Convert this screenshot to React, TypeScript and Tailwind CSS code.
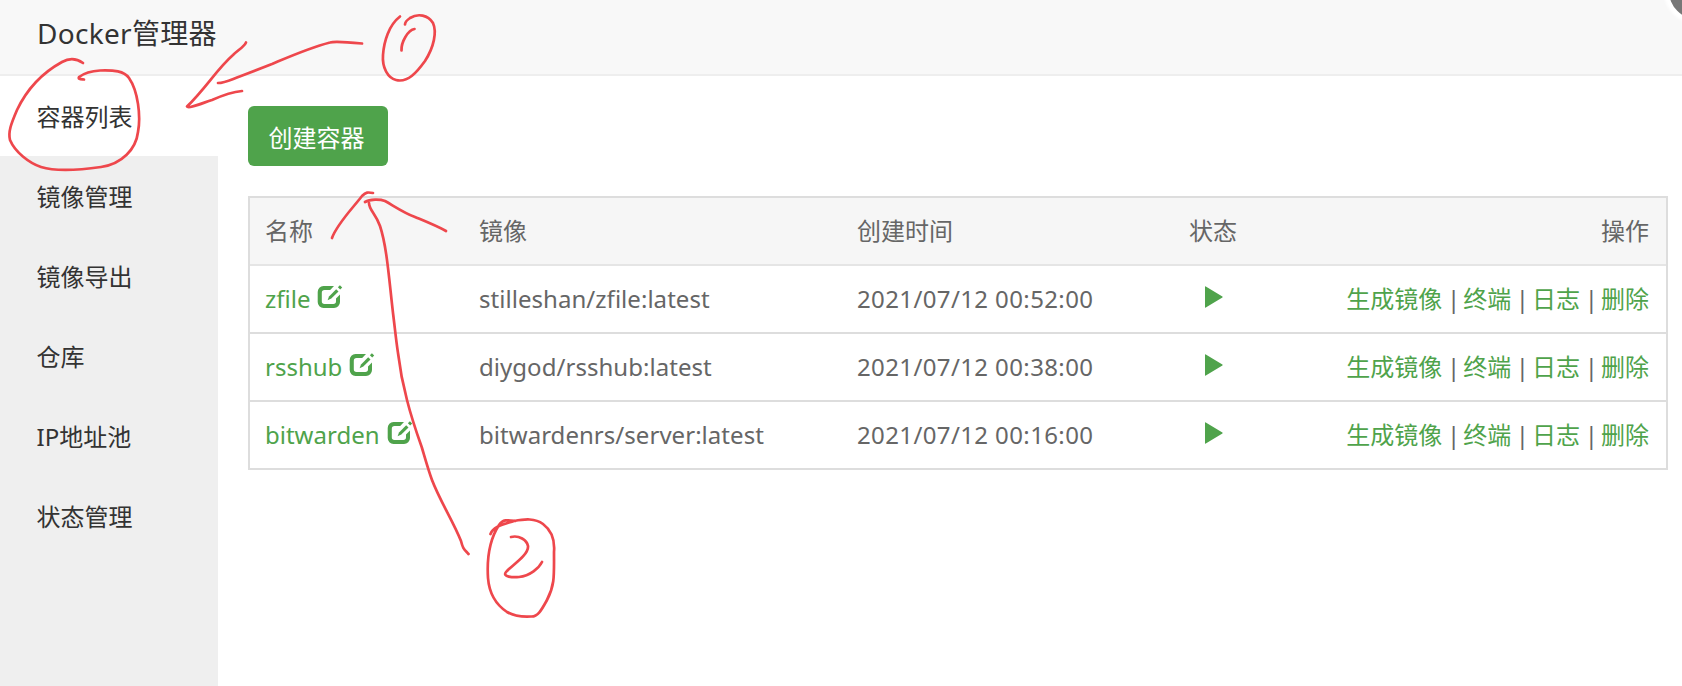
import React from 'react';

interface Container {
  name: string;
  image: string;
  created: string;
}

const menu = ['容器列表', '镜像管理', '镜像导出', '仓库', 'IP地址池', '状态管理'];

const containers: Container[] = [
  { name: 'zfile', image: 'stilleshan/zfile:latest', created: '2021/07/12 00:52:00' },
  { name: 'rsshub', image: 'diygod/rsshub:latest', created: '2021/07/12 00:38:00' },
  { name: 'bitwarden', image: 'bitwardenrs/server:latest', created: '2021/07/12 00:16:00' },
];

const actions = ['生成镜像', '终端', '日志', '删除'];

function EditIcon() {
  return (
    <svg width="26" height="24" viewBox="0 0 26 24" className="ml-[7px] mb-[5px] shrink-0">
      <path
        d="M6.5 1H17L13.2 5H7.5A2.7 2.7 0 0 0 4.8 7.7V16.3A2.7 2.7 0 0 0 7.5 19H16.3A2.7 2.7 0 0 0 19 16.3V13.5L23 9.5V17A6 6 0 0 1 17 23H6.5A6 6 0 0 1 .7 17V7A6 6 0 0 1 6.5 1Z"
        fill="currentColor"
      />
      <path d="M19.2 4.2L21.5 6.4L14.3 13.6L10.6 15.3L12 11.4Z" fill="currentColor" />
      <path d="M22.9 .3L25.2 2.5L23.2 4.5L20.9 2.3Z" fill="currentColor" />
    </svg>
  );
}

function PlayIcon() {
  return (
    <svg width="18" height="22" viewBox="0 0 18 22" className="mb-1 ml-px" fill="currentColor">
      <path d="M0 .8Q0 0 .8.4L17.4 10.4Q18 11 17.4 11.4L.8 21.4Q0 22 0 21.2z" />
    </svg>
  );
}

// Hand-drawn step markers over the page
function Annotations() {
  return (
    <svg
      width="1682"
      height="686"
      viewBox="0 0 1682 686"
      className="absolute left-0 top-0 pointer-events-none"
      fill="none"
      stroke="#ee474c"
      strokeWidth="2.7"
      strokeLinecap="round"
      strokeLinejoin="round"
    >
      <path d="M83 63C76 58 69 58 62 62C42 73 27 89 17 110C11 124 8 132 10 140C15 152 29 163 41 167C57 172 80 170 101 167C122 164 136 149 138 132C141 116 138 91 129 78C124 71 114 70 100 70.5C91 71 83 74 79 77C78 79 80 79 84 79.5" />
      <path d="M246 42.5C244 47 238 50 233 55C217 69 206 88 187 106.5C188 109 200 104 212 100C221 96 231 92 242 91" />
      <path d="M218 83C225 83 230 80 241 76L272 64C291 56 309 48 330 42.5C335 41 346 42 362 43.5" />
      <path d="M400 16.5C389 25 384 41 383 55C382 68 388 78 396 80C408 83 417 72 425 61C434 47 437 32 433 23C428 15 418 13 410 18C407 20 405 22 405 24.5" />
      <path d="M414.5 29C408 30 401 42 401.5 50.5" />
      <path d="M332 238C337 224 352 209 362 196C366 192 368 192 373 193" />
      <path d="M365 202C370 199 380 199 385 201C394 206 404 213 415 217C427 222 437 226 446 231" />
      <path d="M369 203C369 210 376 214 380 226C387 247 389 279 393 313C395 329 396 340 398 353C400 370 403 385 407 400C411 416 416 431 421.7 447C425 458 428 469 432 480C440 501 453 521 461 541C463 549 464 549 468.5 554" />
      <path d="M490.5 534C493 526 505 524 514 521C525 519 535 518 543 524C551 530 555 540 554 552C554 575 555 585 547 600C542 609 538 617 531 616.5C523 617 514 616 507 612C495 604 489 591 488 578C487 562 488 542 499 525C503 519 508 520 515 521" />
      <path d="M511 537C519 535 527 540 528 546C529 555 511 566 506 572C502 577 513 577.5 519 577C530 576 539 568 542 562" />
    </svg>
  );
}

export default function App() {
  return (
    <div className="relative flex h-[686px] w-[1682px] flex-col overflow-hidden bg-white text-2xl text-[#666] font-['Noto_Sans','Noto_Sans_CJK_SC',sans-serif]">
      <header className="flex h-[76px] shrink-0 items-center border-b-2 border-[#eee] bg-[#f8f8f8] pl-[37px] pb-1.5 text-[28px] text-[#333]">
        <h1 className="tracking-[0.3px]">Docker管理器</h1>
      </header>

      <div className="flex flex-1">
        <nav className="w-[218px] shrink-0 bg-[#efefef] text-[#333]">
          {menu.map((label, i) => (
            <a key={label} className={`flex h-20 items-center pl-[36.5px] pt-0.5 ${i === 0 ? 'bg-white' : ''}`}>
              {label}
            </a>
          ))}
        </nav>

        <main className="flex-1 pl-[30px] pr-3.5 pt-[30px]">
          <button type="button" className="block h-[60px] w-[140px] rounded-md bg-[#4fa34b] pr-[3px] pt-1 text-white">
            创建容器
          </button>

          <table className="mt-[30px] w-[1420px] table-fixed border-separate border-spacing-0 border-2 border-b-0 border-[#ddd] text-left whitespace-nowrap">
            <colgroup>
              <col className="w-[213px]" />
              <col className="w-[378px]" />
              <col className="w-[308px]" />
              <col className="w-[128px]" />
              <col />
            </colgroup>
            <thead className="bg-[#f6f6f6]">
              <tr className="h-[68px]">
                <th className="border-b-2 border-[#e5e5e5] pl-[15px] py-0 font-normal">名称</th>
                <th className="border-b-2 border-[#e5e5e5] px-4 py-0 font-normal">镜像</th>
                <th className="border-b-2 border-[#e5e5e5] px-4 py-0 font-normal">创建时间</th>
                <th className="border-b-2 border-[#e5e5e5] px-4 py-0 text-center font-normal">状态</th>
                <th className="border-b-2 border-[#e5e5e5] pr-[17px] py-0 text-right font-normal">操作</th>
              </tr>
            </thead>
            <tbody>
              {containers.map((c) => (
                <tr key={c.name} className="h-[68px]">
                  <td className="border-b-2 border-[#ddd] pl-[15px] py-0 text-[#4fa34b]">
                    <a className="flex items-center">
                      {c.name}
                      <EditIcon />
                    </a>
                  </td>
                  <td className="border-b-2 border-[#ddd] px-4 py-0 tracking-[0.04px]">{c.image}</td>
                  <td className="border-b-2 border-[#ddd] px-4 py-0 tracking-[0.38px]">{c.created}</td>
                  <td className="border-b-2 border-[#ddd] px-4 py-0 text-[#4fa34b]">
                    <div className="flex justify-center">
                      <PlayIcon />
                    </div>
                  </td>
                  <td className="border-b-2 border-[#ddd] pr-[17px] py-0 text-right">
                    {actions.map((action, i) => (
                      <React.Fragment key={action}>
                        {i > 0 && <span className="tracking-[-1.6px]"> | </span>}
                        <a className="text-[#4fa34b]">{action}</a>
                      </React.Fragment>
                    ))}
                  </td>
                </tr>
              ))}
            </tbody>
          </table>
        </main>
      </div>

      {/* corner badge, mostly outside the window */}
      <div className="absolute -top-[37px] left-[1669px] size-[56px] rounded-full bg-[#777] shadow-[0_0_3px_5px_#fff]" />
      <Annotations />
    </div>
  );
}
